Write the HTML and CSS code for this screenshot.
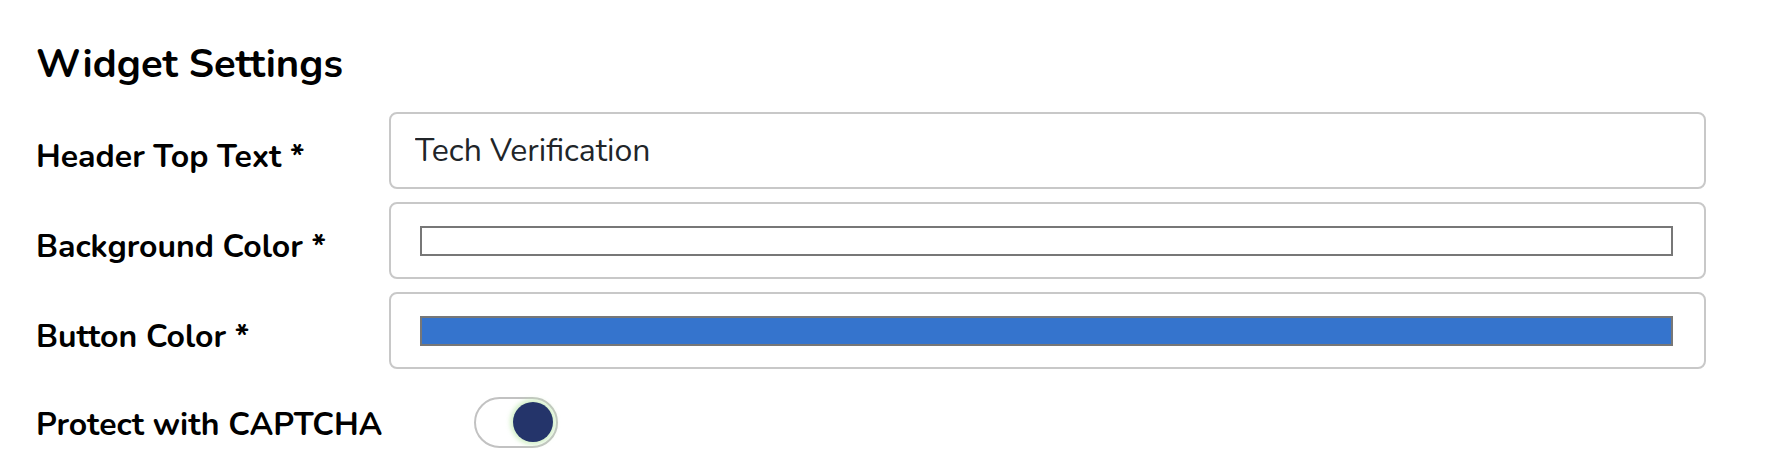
FILE: index.html
```html
<!DOCTYPE html>
<html lang="en">
<head>
<meta charset="utf-8">
<title>Widget Settings</title>
<link rel="stylesheet" href="styles.css">
</head>
<body>
<main class="page">
  <h2 class="title">Widget Settings</h2>
  <form class="form">
    <div class="row">
      <label class="label" for="headerText">Header Top Text *</label>
      <input class="text-input" id="headerText" type="text" value="Tech Verification">
    </div>
    <div class="row">
      <span class="label">Background Color *</span>
      <div class="color-field"><div class="swatch swatch-white"></div></div>
    </div>
    <div class="row">
      <span class="label">Button Color *</span>
      <div class="color-field"><div class="swatch swatch-blue"></div></div>
    </div>
    <div class="row row-switch">
      <span class="label label-switch">Protect with CAPTCHA</span>
      <div class="switch" role="switch" aria-checked="true"><span class="knob"></span></div>
    </div>
  </form>
</main>
</body>
</html>
```
FILE: styles.css
```css
html, body {
  margin: 0;
  background: #ffffff;
}

.page {
  padding: 40px 80px 0 36px;
  font-family: "Nunito", "Lato", sans-serif;
  color: #000000;
}

.title {
  margin: 0 0 24px 0;
  font-size: 40px;
  line-height: 48px;
  font-weight: 700;
}

.form {
  display: flex;
  flex-direction: column;
}

.row {
  display: grid;
  grid-template-columns: 353px 1fr;
  align-items: start;
  margin-bottom: 13px;
}

.label {
  padding-top: 21px;
  font-size: 32px;
  line-height: 48px;
  font-weight: 700;
  white-space: nowrap;
}

.text-input {
  box-sizing: border-box;
  width: 100%;
  height: 77px;
  margin: 0;
  padding: 12px 24px 13px;
  border: 2px solid #c8c8c8;
  border-radius: 8px;
  font-family: "Nunito", "Lato", sans-serif;
  font-size: 32px;
  line-height: 48px;
  color: #212529;
  background: #ffffff;
  outline: none;
}

.color-field {
  box-sizing: border-box;
  height: 77px;
  padding: 22px 31px 0 29px;
  border: 2px solid #c8c8c8;
  border-radius: 8px;
  background: #ffffff;
}

.swatch {
  box-sizing: border-box;
  height: 30px;
  border: 2px solid #777777;
}

.swatch-white { background: #ffffff; }
.swatch-blue { background: #3574cd; }

.row-switch {
  align-items: center;
  margin-top: 13px;
}

.label-switch {
  padding-top: 6px;
}

.switch {
  box-sizing: border-box;
  width: 84px;
  height: 51px;
  margin-left: 85px;
  padding: 0 3px;
  border: 2px solid #c2c2c2;
  border-radius: 26px;
  background: #ffffff;
  display: flex;
  align-items: center;
  justify-content: flex-end;
}

.knob {
  width: 40px;
  height: 40px;
  border-radius: 50%;
  background: #24346a;
  box-shadow: 0 0 4px 3px rgba(190, 232, 175, 0.65);
}
```
